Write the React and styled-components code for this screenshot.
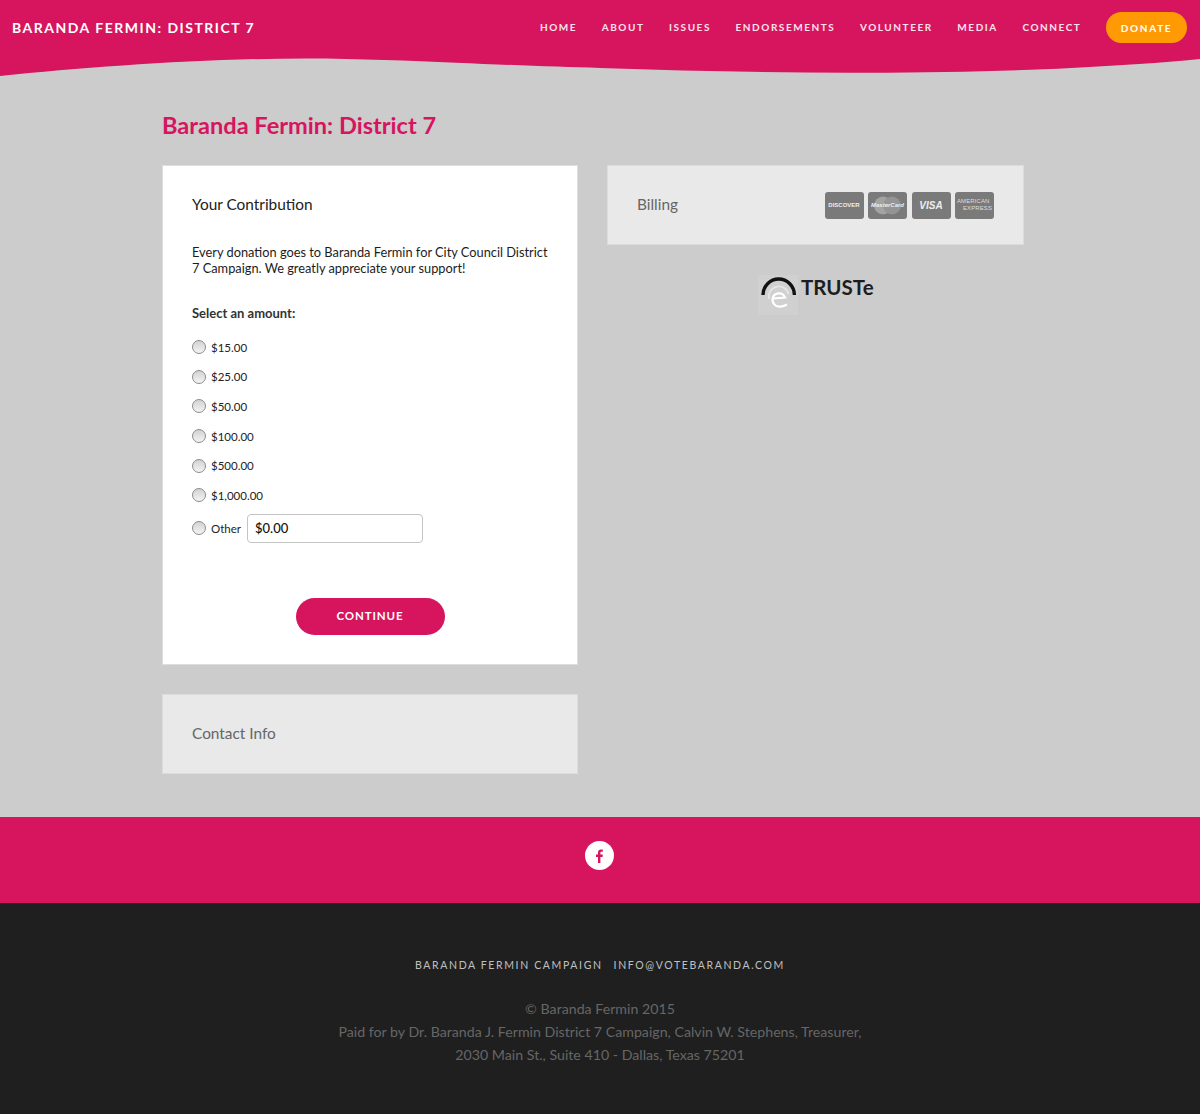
import React from "react";
import styled, { createGlobalStyle } from "styled-components";

const PINK = "#d7145e";
const FONT = `Lato, "Open Sans", "Liberation Sans", sans-serif`;

const Global = createGlobalStyle`
  html, body { margin: 0; padding: 0; background: #cccccc; }
  body { font-family: ${FONT}; color: #222; }
  * { box-sizing: border-box; }
`;

const TopBar = styled.header`
  height: 58px;
  background: ${PINK};
  display: flex;
  justify-content: space-between;
  align-items: flex-start;
  padding: 12px 13px 0 12px;
`;
const Brand = styled.a`
  color: #fff;
  font-size: 14px;
  font-weight: 700;
  letter-spacing: 1.5px;
  line-height: 31px;
  white-space: nowrap;
`;
const Nav = styled.nav`
  display: flex;
  align-items: center;
  gap: 24.6px;
`;
const NavLink = styled.a`
  color: #fbe3ec;
  font-size: 10px;
  font-weight: 700;
  letter-spacing: 1.55px;
  line-height: 31px;
  white-space: nowrap;
`;
const DonateLink = styled.a`
  width: 81px;
  height: 31px;
  border-radius: 16px;
  background: #ff9a05;
  color: #fff;
  font-size: 10px;
  font-weight: 700;
  letter-spacing: 1.7px;
  display: flex;
  align-items: center;
  justify-content: center;
`;
const Wave = styled.svg`
  display: block;
  width: 100%;
  height: 18px;
`;

const Main = styled.main`
  width: 876px;
  margin: 0 auto;
  padding: 34px 0 43px;
`;
const Title = styled.h1`
  margin: 0 0 24px;
  color: ${PINK};
  font-size: 23.6px;
  line-height: 31px;
  font-weight: 700;
`;
const Columns = styled.div`
  display: grid;
  grid-template-columns: 416px 417px;
  column-gap: 29px;
  align-items: start;
`;
const Stack = styled.div`
  display: flex;
  flex-direction: column;
  gap: 29px;
`;
const Card = styled.section`
  background: #fff;
  border: 1px solid #dedede;
  height: 500px;
  padding: 28px 29px;
`;
const CardTitle = styled.h2`
  margin: 0;
  font-size: 15.4px;
  line-height: 20px;
  font-weight: 400;
  color: #222;
`;
const Intro = styled.p`
  margin: 30px -4px 0 0;
  font-size: 12.8px;
  line-height: 16px;
  color: #1c1c1c;
`;
const AmountLabel = styled.div`
  margin-top: 29px;
  font-size: 13px;
  line-height: 16px;
  font-weight: 700;
  color: #333;
`;
const Amounts = styled.div`
  margin-top: 16px;
  display: flex;
  flex-direction: column;
  gap: 9.7px;
`;
const AmountRow = styled.label`
  display: flex;
  align-items: center;
  height: 20px;
  font-size: 11.5px;
  color: #222;
`;
const Radio = styled.input.attrs({ type: "radio", name: "amount" })`
  appearance: none;
  width: 14px;
  height: 14px;
  margin: 0 5px 0 0;
  border-radius: 50%;
  border: 1px solid #8c8c8c;
  background: linear-gradient(#d2d2d2, #f4f4f4);
`;
const OtherRow = styled(AmountRow)`
  height: 29px;
  margin-top: -1.5px;
`;
const OtherInput = styled.input`
  width: 176px;
  height: 29px;
  margin-left: 6px;
  padding: 0 7px;
  border: 1px solid #c4c4c4;
  border-radius: 4px;
  background: #fff;
  font-family: ${FONT};
  font-size: 13px;
  font-weight: 500;
  color: #111;
`;
const ContinueRow = styled.div`
  display: flex;
  justify-content: center;
  margin-top: 55.5px;
`;
const ContinueButton = styled.button`
  width: 149px;
  height: 37px;
  padding: 0 0 2px;
  border: 0;
  border-radius: 19px;
  background: ${PINK};
  color: #fff;
  font-family: ${FONT};
  font-size: 11.5px;
  font-weight: 700;
  letter-spacing: 0.9px;
`;
const Collapsed = styled.section`
  height: 80px;
  background: #e9e9e9;
  border: 1px solid #dcdcdc;
  padding: 0 29px 2px 29px;
  display: flex;
  align-items: center;
  justify-content: space-between;
  font-size: 15.4px;
  color: #666;
`;
const CardIcons = styled.div`
  display: flex;
  gap: 4.5px;
  margin-top: 2px;
`;
const PayCard = styled.div`
  position: relative;
  width: 39px;
  height: 27px;
  border-radius: 3px;
  background: #7a7a7a;
  color: #eee;
  overflow: hidden;
  display: flex;
  align-items: center;
  justify-content: center;
  font-family: "Liberation Sans", sans-serif;
  font-size: ${(p) => p.$size}px;
  font-weight: 700;
  font-style: ${(p) => (p.$italic ? "italic" : "normal")};
  white-space: nowrap;
`;
const McCircles = styled.svg`
  position: absolute;
  left: 5px;
  top: 3px;
`;
const McLabel = styled.span`
  position: relative;
`;
const AmexLabel = styled.span`
  width: 100%;
  padding: 0 2px;
  font-size: 6px;
  line-height: 7px;
  font-weight: 400;
  letter-spacing: 0.1px;
  color: #ddd;
  display: flex;
  flex-direction: column;
  span:last-child { align-self: flex-end; }
`;
const Truste = styled.div`
  margin: 30px 0 0 151px;
  width: 118px;
  height: 42px;
  display: flex;
  align-items: flex-start;
`;
const TrusteMark = styled.div`
  width: 40px;
  height: 40px;
  background: #d0d0d0;
  flex: none;
`;
const TrusteText = styled.span`
  margin: 0 0 0 3px;
  font-size: 20.5px;
  line-height: 24px;
  font-weight: 700;
  color: #1d1d1d;
`;

const Social = styled.div`
  height: 86px;
  background: ${PINK};
  display: flex;
  justify-content: center;
  padding: 24px 1px 0 0;
`;
const SocialBadge = styled.a`
  width: 29px;
  height: 29px;
  border-radius: 50%;
  background: #fff;
  display: flex;
  align-items: center;
  justify-content: center;
`;
const Footer = styled.footer`
  height: 211px;
  background: #1f1f1f;
  text-align: center;
  padding-top: 54px;
`;
const FooterTop = styled.div`
  display: flex;
  justify-content: center;
  gap: 11px;
  color: #c0c0c0;
  font-size: 10.5px;
  line-height: 16px;
  letter-spacing: 1.63px;
`;
const FooterNote = styled.p`
  margin: 24px 0 0;
  color: #666;
  font-size: 14.2px;
  line-height: 23px;
`;

const links = ["HOME", "ABOUT", "ISSUES", "ENDORSEMENTS", "VOLUNTEER", "MEDIA", "CONNECT"];
const amounts = ["$15.00", "$25.00", "$50.00", "$100.00", "$500.00", "$1,000.00"];

export default function App() {
  return (
    <>
      <Global />
      <TopBar>
        <Brand>BARANDA FERMIN: DISTRICT 7</Brand>
        <Nav>
          {links.map((l) => (
            <NavLink key={l}>{l}</NavLink>
          ))}
          <DonateLink>DONATE</DonateLink>
        </Nav>
      </TopBar>
      <Wave viewBox="0 0 1200 18" preserveAspectRatio="none">
        <path
          d="M0 18 C90 9 200 0.5 306 0.5 C360 0.5 410 3 456 4.7 C510 7 560 9 600 10 C690 13 780 15 868 14.7 C940 14.5 1010 13 1071 10 C1120 7.5 1160 5 1200 1 L1200 0 L0 0 Z"
          fill={PINK}
        />
      </Wave>
      <Main>
        <Title>Baranda Fermin: District 7</Title>
        <Columns>
          <Stack>
            <Card>
              <CardTitle>Your Contribution</CardTitle>
              <Intro>
                Every donation goes to Baranda Fermin for City Council District 7 Campaign. We greatly appreciate your support!
              </Intro>
              <AmountLabel>Select an amount:</AmountLabel>
              <Amounts>
                {amounts.map((a) => (
                  <AmountRow key={a}>
                    <Radio />
                    {a}
                  </AmountRow>
                ))}
                <OtherRow>
                  <Radio />
                  Other
                  <OtherInput defaultValue="$0.00" />
                </OtherRow>
              </Amounts>
              <ContinueRow>
                <ContinueButton>CONTINUE</ContinueButton>
              </ContinueRow>
            </Card>
            <Collapsed>Contact Info</Collapsed>
          </Stack>
          <div>
            <Collapsed>
              Billing
              <CardIcons>
                <PayCard $size={6}>DISCOVER</PayCard>
                <PayCard $size={6} $italic>
                  <McCircles width="29" height="21" viewBox="0 0 29 21">
                    <circle cx="10" cy="10.5" r="9" fill="#a3a3a3" />
                    <circle cx="19" cy="10.5" r="9" fill="#949494" />
                  </McCircles>
                  <McLabel>MasterCard</McLabel>
                </PayCard>
                <PayCard $size={10} $italic>VISA</PayCard>
                <PayCard>
                  <AmexLabel>
                    <span>AMERICAN</span>
                    <span>EXPRESS</span>
                  </AmexLabel>
                </PayCard>
              </CardIcons>
            </Collapsed>
            <Truste>
              <TrusteMark>
                <svg width="40" height="40" viewBox="0 0 40 40">
                  <path d="M5 20 A15.7 16 0 0 1 36.4 20" fill="none" stroke="#111" strokeWidth="3.4" />
                  <path d="M11 24 A10 10 0 0 1 30.5 19" fill="none" stroke="#e6e6e6" strokeWidth="1.8" />
                  <path d="M15 23.5 L27 22.5 A6.5 6.5 0 0 0 14.5 24 C14.5 30 20 34.5 29 29.5" fill="none" stroke="#fff" strokeWidth="2.2" />
                </svg>
              </TrusteMark>
              <TrusteText>TRUSTe</TrusteText>
            </Truste>
          </div>
        </Columns>
      </Main>
      <Social>
        <SocialBadge>
          <svg width="9" height="14" viewBox="0 0 9 14">
            <path d="M3 14V8H1V5.6h2V3.8C3 1.7 4.2.6 6 .6c.9 0 1.6.1 1.8.1v2.1H6.6c-1 0-1.2.5-1.2 1.2v1.6h2.4L7.5 8H5.4v6z" fill={PINK} />
          </svg>
        </SocialBadge>
      </Social>
      <Footer>
        <FooterTop>
          <span>BARANDA FERMIN CAMPAIGN</span>
          <span>INFO@VOTEBARANDA.COM</span>
        </FooterTop>
        <FooterNote>
          © Baranda Fermin 2015
          <br />
          Paid for by Dr. Baranda J. Fermin District 7 Campaign, Calvin W. Stephens, Treasurer,
          <br />
          2030 Main St., Suite 410 - Dallas, Texas 75201
        </FooterNote>
      </Footer>
    </>
  );
}
